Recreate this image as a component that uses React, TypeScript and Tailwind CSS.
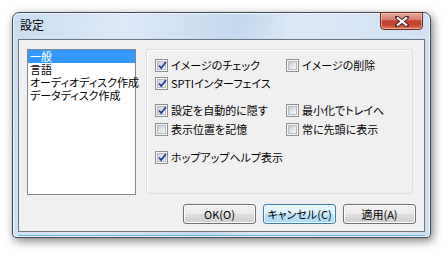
const font = "font-['Noto_Sans_CJK_JP','Noto_Sans',sans-serif] [font-feature-settings:'palt']";

function Check({ on }: { on: boolean }) {
  return (
    <span className="flex h-[13px] w-[13px] shrink-0 items-center justify-center border border-[#8f8f8f] bg-[#f6f6f6]">
      <span className="relative flex h-[9px] w-[9px] items-center justify-center border border-[#b9bcc1] bg-[linear-gradient(135deg,#c9ccd1_0%,#e4e6e9_55%,#f7f7f7_100%)]">
        {on && (
          <svg width="9" height="9" viewBox="0 0 9 9" className="absolute left-[0px] top-[-1px]">
            <path d="M1 4.5 L3.2 7 L8 1" fill="none" stroke="#1f3f98" strokeWidth="1.8" />
          </svg>
        )}
      </span>
    </span>
  );
}

function Row({ label, on }: { label: string; on: boolean }) {
  return (
    <div className="flex h-[13px] items-center">
      <Check on={on} />
      <span className="ml-[3px] whitespace-nowrap text-[11px] leading-[13px] text-black">{label}</span>
    </div>
  );
}

function Btn({ label, focus }: { label: string; focus?: boolean }) {
  return (
    <button
      className={
        focus
          ? "flex h-[20px] w-[73px] items-center justify-center rounded-[3px] border border-[#3c7fb1] bg-[linear-gradient(#eaf6fd_0%,#d9f0fc_50%,#bee6fd_51%,#a7d9f5_100%)] text-[11px] leading-none text-black shadow-[inset_0_0_0_1px_#f4fbff]"
          : "flex h-[20px] w-[73px] items-center justify-center rounded-[3px] border border-[#707070] bg-[linear-gradient(#f2f2f2_0%,#ebebeb_50%,#dddddd_51%,#cfcfcf_100%)] text-[11px] leading-none text-black shadow-[inset_0_0_0_1px_#fcfcfc]"
      }
    >
      {label}
    </button>
  );
}

const items = ["一般", "言語", "オーディオディスク作成", "データディスク作成"];

export default function App() {
  return (
    <div className={`min-h-screen bg-white pl-[12px] pt-[12px] ${font}`}>
      <div className="flex h-[226px] w-[419px] flex-col rounded-t-[7px] rounded-b-[4px] border border-[#404a57] bg-[linear-gradient(100deg,#cadcf1_0%,#dce9f8_25%,#d2e2f4_36%,#c4d8ef_50%,#dbe8f7_62%,#d5e4f5_80%,#cfe0f3_100%)] shadow-[2px_3px_10px_rgba(0,0,0,0.5),inset_0_0_0_1px_rgba(255,255,255,0.7)]">
        {/* title bar */}
        <div className="flex h-[26px] shrink-0 items-start justify-between">
          <span className="ml-[7px] mt-[4px] text-[12px] leading-[16px] text-black">設定</span>
          <div className="mr-[7px] mt-[-1px] flex h-[18px] w-[43px] items-center justify-center rounded-b-[4px] border border-[#6a2a20] bg-[linear-gradient(#e8a697_0%,#d9806f_40%,#c0412c_50%,#c9472f_75%,#dd7a5e_100%)] shadow-[inset_0_0_0_1px_rgba(255,220,210,0.5)]">
            <svg width="14" height="11" viewBox="0 0 14 11">
              <path d="M2 1.5 L12 9.5 M12 1.5 L2 9.5" stroke="#4a2a28" strokeWidth="4" strokeLinecap="square" />
              <path d="M2 1.5 L12 9.5 M12 1.5 L2 9.5" stroke="#ffffff" strokeWidth="2.2" />
            </svg>
          </div>
        </div>

        {/* client area */}
        <div className="mx-[5px] flex h-[193px] shrink-0 flex-col border border-[#6c7580] bg-[#f0f0f0]">
          <div className="flex pl-[8px] pt-[9px]">
            <div className="h-[146px] w-[109px] border border-[#828790] bg-white">
              {items.map((t, i) => (
                <div
                  key={t}
                  className={
                    i === 0
                      ? "h-[13px] whitespace-nowrap bg-[#3399ff] pl-[2px] text-[11px] leading-[13px] text-white"
                      : "h-[13px] whitespace-nowrap pl-[2px] text-[11px] leading-[13px] text-black"
                  }
                >
                  {t}
                </div>
              ))}
            </div>

            <div className="ml-[10px] flex h-[145px] w-[267px] flex-col rounded-[3px] border border-[#d5dfe5] pl-[8px] pt-[9px] shadow-[inset_1px_1px_0_#ffffff]">
              <div className="grid grid-cols-[131px_1fr]">
                <Row label="イメージのチェック" on />
                <Row label="イメージの削除" on={false} />
              </div>
              <div className="mt-[5px]">
                <Row label="SPTIインターフェイス" on />
              </div>
              <div className="mt-[14px] grid grid-cols-[131px_1fr]">
                <Row label="設定を自動的に隠す" on />
                <Row label="最小化でトレイへ" on={false} />
              </div>
              <div className="mt-[6px] grid grid-cols-[131px_1fr]">
                <Row label="表示位置を記憶" on={false} />
                <Row label="常に先頭に表示" on={false} />
              </div>
              <div className="mt-[15px]">
                <Row label="ホップアップヘルプ表示" on />
              </div>
            </div>
          </div>

          <div className="mt-[9px] flex justify-end gap-[7px] pr-[8px]">
            <Btn label="OK(O)" />
            <Btn label="キャンセル(C)" focus />
            <Btn label="適用(A)" />
          </div>
        </div>
        <div className="mx-[5px] mt-auto mb-[1px] h-px bg-[#5fb4e0]" />
      </div>
    </div>
  );
}
